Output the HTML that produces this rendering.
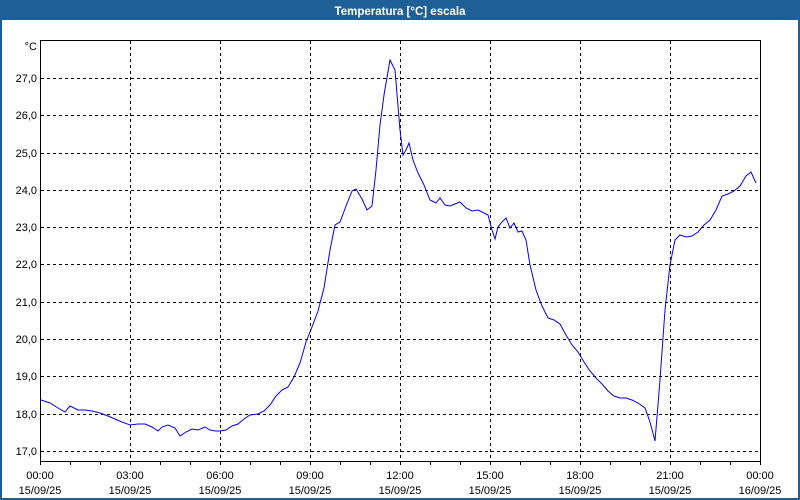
<!DOCTYPE html>
<html><head><meta charset="utf-8"><style>
html,body{margin:0;padding:0;width:800px;height:500px;overflow:hidden;background:#fff}
</style></head><body>
<svg width="800" height="500" xmlns="http://www.w3.org/2000/svg" font-family="Liberation Sans, sans-serif" font-size="11">
<rect x="0" y="0" width="800" height="500" fill="#1e5f95"/>
<rect x="2" y="20" width="796" height="478" fill="#fff"/>
<text x="400" y="15" fill="#fff" font-weight="bold" text-anchor="middle" font-size="11.5">Temperatura [°C] escala</text>
<g stroke="#000" stroke-dasharray="3,3" stroke-width="1">
<line x1="130.5" y1="41" x2="130.5" y2="461"/><line x1="220.5" y1="41" x2="220.5" y2="461"/><line x1="310.5" y1="41" x2="310.5" y2="461"/><line x1="400.5" y1="41" x2="400.5" y2="461"/><line x1="490.5" y1="41" x2="490.5" y2="461"/><line x1="580.5" y1="41" x2="580.5" y2="461"/><line x1="670.5" y1="41" x2="670.5" y2="461"/>
<line x1="41" y1="78.5" x2="760" y2="78.5"/><line x1="41" y1="115.5" x2="760" y2="115.5"/><line x1="41" y1="153.5" x2="760" y2="153.5"/><line x1="41" y1="190.5" x2="760" y2="190.5"/><line x1="41" y1="227.5" x2="760" y2="227.5"/><line x1="41" y1="264.5" x2="760" y2="264.5"/><line x1="41" y1="302.5" x2="760" y2="302.5"/><line x1="41" y1="339.5" x2="760" y2="339.5"/><line x1="41" y1="376.5" x2="760" y2="376.5"/><line x1="41" y1="414.5" x2="760" y2="414.5"/><line x1="41" y1="451.5" x2="760" y2="451.5"/>
</g>
<rect x="40.5" y="40.5" width="720" height="421" fill="none" stroke="#000"/>
<g stroke="#000"><path d="M40.5 461v4M70.5 461v4M100.5 461v4M130.5 461v4M160.5 461v4M190.5 461v4M220.5 461v4M250.5 461v4M280.5 461v4M310.5 461v4M340.5 461v4M370.5 461v4M400.5 461v4M430.5 461v4M460.5 461v4M490.5 461v4M520.5 461v4M550.5 461v4M580.5 461v4M610.5 461v4M640.5 461v4M670.5 461v4M700.5 461v4M730.5 461v4M760.5 461v4"/></g>
<g fill="#000" text-anchor="end">
<text x="37" y="50">°C</text>
<text x="37" y="82">27,0</text><text x="37" y="119">26,0</text><text x="37" y="157">25,0</text><text x="37" y="194">24,0</text><text x="37" y="231">23,0</text><text x="37" y="268">22,0</text><text x="37" y="306">21,0</text><text x="37" y="343">20,0</text><text x="37" y="380">19,0</text><text x="37" y="418">18,0</text><text x="37" y="455">17,0</text>
</g>
<g fill="#000" text-anchor="middle">
<text x="40" y="479">00:00</text><text x="40" y="494">15/09/25</text>
<text x="130" y="479">03:00</text><text x="130" y="494">15/09/25</text>
<text x="220" y="479">06:00</text><text x="220" y="494">15/09/25</text>
<text x="310" y="479">09:00</text><text x="310" y="494">15/09/25</text>
<text x="400" y="479">12:00</text><text x="400" y="494">15/09/25</text>
<text x="490" y="479">15:00</text><text x="490" y="494">15/09/25</text>
<text x="580" y="479">18:00</text><text x="580" y="494">15/09/25</text>
<text x="670" y="479">21:00</text><text x="670" y="494">15/09/25</text>
<text x="760" y="479">00:00</text><text x="760" y="494">16/09/25</text>
</g>
<polyline fill="none" stroke="#0000ff" stroke-width="1" points="41,400 50,403 58,408 65,412 70,406 78,410 85,410 92,411 100,413 108,416 115,419 122,422 130,425 138,424 145,424 152,427 158,431 162,427 168,425 175,428 180,436 186,432 192,429 198,430 205,427 210,430 215,431 220,431 226,430 232,426 238,424 244,419 250,415 258,414 264,411 270,405 276,396 282,390 288,387 294,377 300,363 306,342 312,327 318,311 324,288 330,250 335,225 340,222 346,206 352,191 356,189 362,199 367,210 372,206 376,170 380,125 384,95 390,60 395,70 400,130 403,155 406,150 409,143 413,160 418,173 424,185 430,200 436,203 440,198 445,205 450,206 455,204 460,202 466,208 472,211 478,210 484,213 488,215 492,230 495,239 498,227 502,222 506,218 510,228 514,223 518,232 522,231 526,240 530,265 536,290 542,306 548,318 554,320 560,324 566,335 572,345 578,352 584,362 590,371 596,378 602,384 608,391 614,396 620,398 626,398 632,400 638,403 645,408 650,422 655,441 660,380 665,310 670,265 675,240 680,235 686,237 692,236 698,232 704,225 710,220 716,210 722,196 728,194 734,191 740,186 746,176 751,172 756,183"/>
</svg>
</body></html>
